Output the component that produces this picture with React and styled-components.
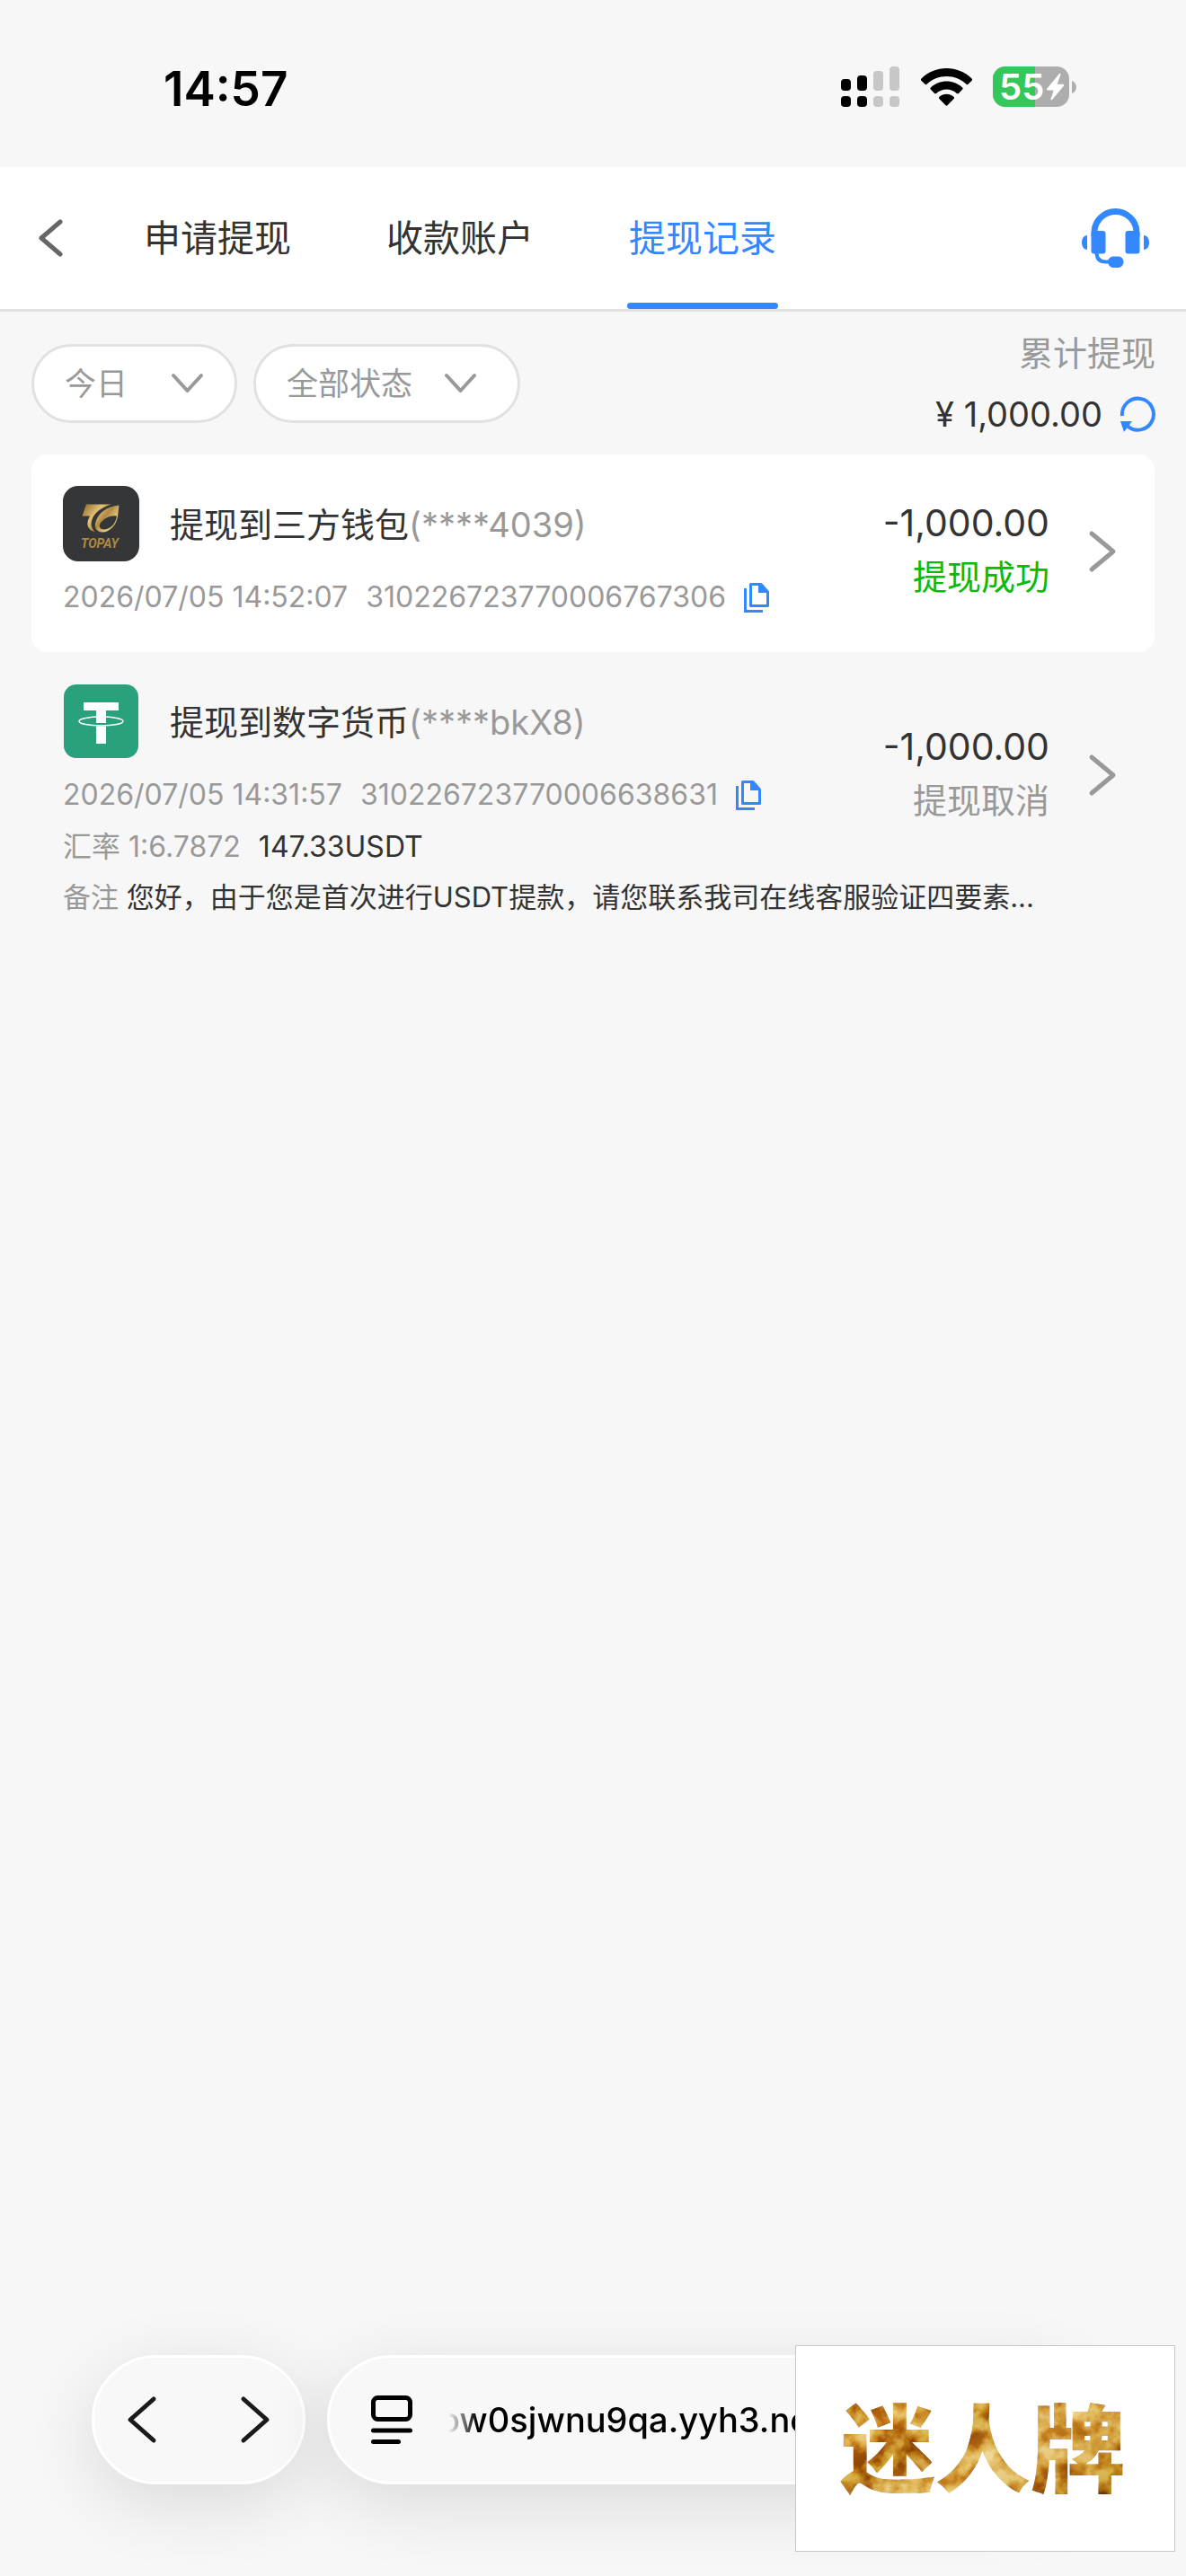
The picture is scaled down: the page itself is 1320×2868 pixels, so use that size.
import React from 'react'
import styled, { createGlobalStyle } from 'styled-components'

const color = {
  page: '#f7f7f7',
  white: '#ffffff',
  line: '#e1e1e1',
  ink: '#333333',
  mute: '#999999',
  blue: '#3388ff',
  green: '#09bb07',
}

const fontSize = {
  xs: '31px',
  sm: '32px',
  md: '35px',
  base: '38px',
  lg: '41px',
  xl: '53px',
}

const GlobalStyle = createGlobalStyle`
  * {
    box-sizing: border-box;
  }

  body {
    margin: 0;
    background: ${color.page};
    color: ${color.ink};
    font-family: Inter, 'Noto Sans CJK SC', sans-serif;
  }

  button,
  select {
    padding: 0;
    border: 0;
    background: none;
    color: inherit;
    font: inherit;
    cursor: pointer;
  }

  h2,
  p {
    margin: 0;
    font-weight: 400;
  }

  svg {
    display: block;
    flex: none;
    overflow: visible;
  }
`

const Page = styled.div`
  display: flex;
  flex-direction: column;
  min-height: 100vh;
  overflow: hidden;
`

/* status bar */

const StatusBar = styled.div`
  display: flex;
  align-items: center;
  justify-content: space-between;
  height: 186px;
  padding: 8px 121px 0 182px;
`

const Clock = styled.time`
  padding-top: 4px;
  color: #000;
  font-size: ${fontSize.xl};
  font-weight: 600;
  line-height: 64px;
`

const StatusIcons = styled.div`
  display: flex;
  align-items: center;
  gap: 23px;
`

/* top navigation */

const Header = styled.header`
  display: flex;
  align-items: stretch;
  height: 161px;
  padding: 0 40px;
  background: ${color.white};
  border-bottom: 3px solid ${color.line};
`

const IconButton = styled.button`
  display: flex;
  align-items: center;
  justify-content: center;
`

const Tabs = styled.nav`
  display: flex;
  flex: 1;
  gap: 102px;
  margin-left: 86px;
`

const Tab = styled.a`
  display: flex;
  align-items: center;
  justify-content: center;
  position: relative;
  width: 168px;
  padding-bottom: 6px;
  color: ${color.ink};
  font-size: ${fontSize.lg};
  text-decoration: none;

  &[aria-current='page'] {
    color: ${color.blue};
  }

  &[aria-current='page']::after {
    content: '';
    position: absolute;
    right: 0;
    bottom: 0;
    left: 0;
    height: 7px;
    border-radius: 4px;
    background: ${color.blue};
  }
`

/* filters and total */

const Toolbar = styled.section`
  display: flex;
  align-items: flex-start;
  height: 159px;
  padding: 20px 34px 0 35px;
`

const Filters = styled.div`
  display: flex;
  flex: 1;
  gap: 18px;
  padding-top: 16px;
`

const Filter = styled.label`
  display: block;
  position: relative;

  select {
    appearance: none;
    display: block;
    width: ${(props) => (props.$wide ? '297px' : '229px')};
    height: 88px;
    padding: 0 34px;
    border: 3px solid ${color.line};
    border-radius: 44px;
    background: ${color.white};
    color: ${color.mute};
    font-size: ${fontSize.md};
    outline: none;
  }

  svg {
    position: absolute;
    top: 32px;
    right: ${(props) => (props.$wide ? '48px' : '37px')};
    pointer-events: none;
  }
`

const Total = styled.div`
  display: flex;
  flex-direction: column;
  align-items: flex-end;
  font-size: ${fontSize.base};
`

const TotalLabel = styled.span`
  color: ${color.mute};
  line-height: 52px;
`

const TotalValue = styled.div`
  display: flex;
  align-items: center;
  gap: 20px;
  margin-top: 21px;
  line-height: 42px;
`

/* records */

const RecordList = styled.ul`
  flex: 1;
  margin: 0;
  padding: 0 35px;
  list-style: none;
`

const Record = styled.li`
  display: grid;
  grid-template-columns: 1fr auto auto;
  align-items: center;
  padding: 35px 42px 37px 35px;
  border-radius: 18px;

  &:nth-child(odd) {
    background: ${color.white};
  }
`

const RecordTitle = styled.div`
  display: flex;
  align-items: center;
  gap: 34px;

  h2 {
    padding-bottom: 4px;
    font-size: ${fontSize.base};
    white-space: nowrap;
  }
`

const RecordMeta = styled.div`
  display: flex;
  align-items: center;
  gap: 20px;
  margin-top: ${(props) => (props.$tight ? '10px' : '16px')};
  font-size: ${fontSize.sm};
  line-height: 48px;
  white-space: nowrap;
`

const Muted = styled.span`
  color: ${color.mute};
`

const RecordSum = styled.div`
  padding-bottom: 10px;
  font-size: ${fontSize.base};
  line-height: 56px;
  text-align: right;

  strong {
    display: block;
    font-size: ${fontSize.lg};
    font-weight: 400;
    line-height: 64px;
  }
`

const RecordStatus = styled.span`
  color: ${(props) => (props.$done ? color.green : color.mute)};
`

const OpenButton = styled(IconButton)`
  margin-left: 43px;
`

const Remark = styled.p`
  grid-column: 1 / 3;
  margin-top: 8px;
  font-size: ${fontSize.xs};
  line-height: 48px;
  white-space: nowrap;
`

/* browser bar */

const BrowserBar = styled.footer`
  display: flex;
  gap: 24px;
  position: relative;
  padding: 0 102px 102px;
`

const Capsule = styled.div`
  display: flex;
  align-items: center;
  height: 144px;
  border: 3px solid ${color.white};
  border-radius: 72px;
  background: #f8f8f8;
  box-shadow: 0 20px 80px rgba(0, 0, 0, 0.12);
`

const HistoryCapsule = styled(Capsule)`
  justify-content: space-between;
  width: 238px;
  padding: 0 34px;
`

const AddressCapsule = styled(Capsule)`
  flex: 1;
  gap: 30px;
  padding: 0 46px;
`

const Address = styled.button`
  flex: 1;
  color: #000;
  font-size: ${fontSize.base};
  font-weight: 500;
  line-height: 54px;
  text-align: left;
  white-space: nowrap;
  mask-image: linear-gradient(to right, transparent 10px, #000 42px);
`

const Badge = styled.aside`
  display: flex;
  align-items: center;
  justify-content: center;
  position: absolute;
  top: -11px;
  right: 12px;
  width: 423px;
  height: 230px;
  border: 1px solid #c8c8c8;
  background: ${color.white};
`

const BadgeText = styled.text`
  font-family: 'Noto Sans CJK SC', sans-serif;
  font-size: 106px;
  font-style: oblique 12deg;
  font-weight: 900;
`

const LogoText = styled.text`
  font-family: Roboto, sans-serif;
  font-size: 14px;
  font-style: italic;
  font-weight: 700;
`

const Chevron = ({ d, width, height, stroke, weight = 5 }) => (
  <svg width={width} height={height} viewBox={`0 0 ${width} ${height}`} fill="none" aria-hidden="true">
    <path d={d} stroke={stroke} strokeWidth={weight} strokeLinecap="round" strokeLinejoin="round" />
  </svg>
)

const DownIcon = () => <Chevron d="M3 3 18.500 20 34 3" width={37} height={23} stroke={color.mute} weight={4} />

const SignalIcon = () => (
  <svg width="66" height="46" viewBox="0 0 66 46" aria-hidden="true">
    <rect x="0" y="14" width="11" height="13" rx="4" />
    <rect x="18" y="10" width="11" height="17" rx="4" />
    <rect x="0" y="33" width="11" height="12" rx="4" />
    <rect x="18" y="33" width="11" height="12" rx="4" />
    <g fill="#c7c7c7">
      <rect x="36" y="5" width="11" height="22" rx="4" />
      <rect x="54" y="0" width="11" height="27" rx="4" />
      <rect x="36" y="33" width="11" height="12" rx="4" />
      <rect x="54" y="33" width="11" height="12" rx="4" />
    </g>
  </svg>
)

const WifiIcon = () => (
  <svg width="57" height="42" viewBox="0 0 57 42" aria-hidden="true">
    <path d="M28.500 0C39 0 49 4 56.500 11.500c.7.700.7 1.500.1 2.200L52.500 17.800c-.6.600-1.400.6-2 0C44.500 12.200 37 9 28.500 9S12.500 12.200 6.500 17.800c-.6.600-1.400.6-2 0L.4 13.700c-.6-.7-.6-1.500.1-2.200C8 4 18 0 28.500 0z" />
    <path d="M28.500 14.500c6.500 0 12.800 2.500 17.600 6.900.7.600.7 1.500.1 2.100l-4.300 4.400c-.6.600-1.400.6-2 .1C36.800 25.200 32.800 23.500 28.500 23.500S20.200 25.200 17.100 28c-.6.500-1.400.5-2-.1l-4.300-4.400c-.6-.6-.6-1.500.1-2.100 4.800-4.400 11.100-6.900 17.600-6.900z" />
    <path d="M28.500 28.800c3 0 5.800 1.100 8 3 .7.600.7 1.500.1 2.100l-7.100 7.300c-.6.600-1.400.6-2 0l-7.100-7.300c-.6-.6-.6-1.500.1-2.100 2.200-1.900 5-3 8-3z" />
  </svg>
)

const BatteryIcon = () => (
  <svg width="94" height="46" viewBox="0 0 94 46" role="img" aria-label="55%">
    <defs>
      <clipPath id="battery">
        <rect width="85" height="45" rx="14" />
      </clipPath>
    </defs>
    <g clipPath="url(#battery)">
      <rect width="85" height="45" fill="#adadad" />
      <rect width="47" height="45" fill="#34c759" />
    </g>
    <path d="M88 16c3 1 5 4 5 7s-2 6-5 7z" fill="#adadad" />
    <text x="7" y="37" fill="#fff" fontFamily="Inter, sans-serif" fontSize="40" fontWeight="600">
      55
    </text>
    <path d="M74 8 60 25c-.5.700 0 1.500.800 1.500h7L64.500 36c-.3 1 .9 1.700 1.600.9L79 21.500c.6-.7.100-1.700-.8-1.700h-6.500L75.500 9c.4-1-.8-1.800-1.500-1z" fill="#fff" />
  </svg>
)

const HeadsetIcon = () => (
  <svg width="76" height="67" viewBox="0 0 76 67" fill={color.blue} aria-hidden="true">
    <path d="M14 31v-4a23.500 23.500 0 0 1 47 0v4" fill="none" stroke={color.blue} strokeWidth="7" />
    <rect x="10.500" y="25" width="16" height="25.500" rx="3" />
    <rect x="48.500" y="25" width="16" height="25.500" rx="3" />
    <path d="M6 30v16c-4 0-6-4-6-8s2-8 6-8zM69 30v16c4 0 6-4 6-8s-2-8-6-8z" />
    <path d="M16.500 49c0 7.500 4 10.500 10 10.500h6" fill="none" stroke={color.blue} strokeWidth="4" />
    <path d="M35 53.500h5.500c3.500 0 6 2.700 6 6s-2.500 6.500-6 6.500H35c-2.500 0-4-1.500-5.500-4v-5c1.500-2.300 3-3.500 5.500-3.500z" />
  </svg>
)

const RefreshIcon = () => (
  <svg width="39" height="39" viewBox="0 0 39 39" fill="none" aria-hidden="true">
    <path d="M2 21a17.500 17.500 0 1 1 5.500 11" stroke={color.blue} strokeWidth="4" />
    <path d="M0 27h13L4 39z" fill={color.blue} />
  </svg>
)

const CopyIcon = () => (
  <svg width="28" height="33" viewBox="0 0 28 33" fill="none" aria-hidden="true">
    <path d="M1.500 6v25.500H21" stroke={color.blue} strokeWidth="3" />
    <path d="M7.500 1.500H19L26.500 10v15.500h-19z" stroke={color.blue} strokeWidth="3" strokeLinejoin="round" />
    <path d="M16 1h4l7 8v2H16z" fill={color.blue} />
  </svg>
)

const TopayLogo = () => (
  <svg width="85" height="84" viewBox="0 0 85 84" aria-hidden="true">
    <defs>
      <linearGradient id="topay" gradientUnits="userSpaceOnUse" x1="22" y1="20" x2="62" y2="52">
        <stop offset="0" stopColor="#8d6526" />
        <stop offset="0.35" stopColor="#e3c277" />
        <stop offset="0.55" stopColor="#b08a42" />
        <stop offset="0.75" stopColor="#e8cb82" />
        <stop offset="1" stopColor="#a37a33" />
      </linearGradient>
    </defs>
    <rect width="85" height="84" rx="17" fill="#353638" />
    <g fill="url(#topay)">
      <path d="M26 20.500h28C44 23.500 36 29 33 36c-2.500 6-1.500 11 2.500 15-8-1.500-10.500-9-5.500-17.500h-8.500z" />
      <path
        fillRule="evenodd"
        d="M62.500 21.500 61 34c-1.500 10-9 17.500-17 17.500-6.500 0-9.500-5-7.500-11.500C39.500 30 49 22.500 62.500 21.500zM60 33.500c-6-1.500-14 2-18 7.500-2.500 4-1 7.500 4 7.500 6.500 0 13-6.500 14-15z"
      />
    </g>
    <LogoText x="20" y="69" fill="#b08a42">
      TOPAY
    </LogoText>
  </svg>
)

const TetherLogo = () => (
  <svg width="85" height="84" viewBox="0 0 85 84" aria-hidden="true">
    <rect x="1" y="1" width="83" height="82" rx="14" fill="#28a17c" />
    <path d="M23 21h39v9H48v14H37V30H23zM37 47.500h11V67H37z" fill="#fff" />
    <ellipse cx="42.500" cy="42" rx="24.500" ry="5" fill="none" stroke="#fff" strokeWidth="1.500" />
  </svg>
)

const ReaderIcon = () => (
  <svg width="46" height="54" viewBox="0 0 46 54" fill="none" stroke="#000" strokeWidth="5" strokeLinecap="round" aria-hidden="true">
    <rect x="2.500" y="2.500" width="41" height="24" rx="5" />
    <path d="M2.500 39h41M2.500 51.500h28" />
  </svg>
)

const BadgeLogo = () => (
  <svg width="350" height="164" viewBox="0 0 350 164">
    <defs>
      <linearGradient id="gold" x1="0" y1="0" x2="1" y2="1">
        <stop offset="0" stopColor="#a8700f" />
        <stop offset="0.25" stopColor="#d9a441" />
        <stop offset="0.4" stopColor="#b57a16" />
        <stop offset="0.55" stopColor="#e0b65c" />
        <stop offset="0.8" stopColor="#bd8420" />
        <stop offset="1" stopColor="#8a5806" />
      </linearGradient>
      <filter id="foil" x="-0.050" y="0" width="1.100" height="1" colorInterpolationFilters="sRGB">
        <feTurbulence type="fractalNoise" baseFrequency="0.04" numOctaves="4" seed="8" result="noise" />
        <feColorMatrix
          in="noise"
          values="2.200 1.200 0 0 -1.150  2.200 1.200 0 0 -1.200  2.200 1.200 0 0 -1.250  0 0 0 0 1"
          result="tint"
        />
        <feBlend in="tint" in2="SourceGraphic" mode="soft-light" result="mix" />
        <feComposite in="mix" in2="SourceGraphic" operator="in" />
      </filter>
    </defs>
    <BadgeText x="13" y="122" fill="url(#gold)" filter="url(#foil)">
      迷人牌
    </BadgeText>
  </svg>
)

const records = [
  {
    id: '310226723770006767306',
    logo: <TopayLogo />,
    title: '提现到三方钱包',
    account: '(****4039)',
    time: '2026/07/05 14:52:07',
    amount: '-1,000.00',
    status: '提现成功',
    done: true,
  },
  {
    id: '310226723770006638631',
    logo: <TetherLogo />,
    title: '提现到数字货币',
    account: '(****bkX8)',
    time: '2026/07/05 14:31:57',
    amount: '-1,000.00',
    status: '提现取消',
    rate: '1:6.7872',
    received: '147.33USDT',
    remark: '您好，由于您是首次进行USDT提款，请您联系我司在线客服验证四要素...',
  },
]

const RecordItem = ({ record }) => (
  <Record>
    <div>
      <RecordTitle>
        {record.logo}
        <h2>
          {record.title}
          <Muted>{record.account}</Muted>
        </h2>
      </RecordTitle>
      <RecordMeta>
        <Muted>{record.time}</Muted>
        <Muted>{record.id}</Muted>
        <IconButton aria-label="复制">
          <CopyIcon />
        </IconButton>
      </RecordMeta>
      {record.rate && (
        <RecordMeta $tight>
          <Muted>汇率 {record.rate}</Muted>
          <span>{record.received}</span>
        </RecordMeta>
      )}
    </div>
    <RecordSum>
      <strong>{record.amount}</strong>
      <RecordStatus $done={record.done}>{record.status}</RecordStatus>
    </RecordSum>
    <OpenButton aria-label="详情">
      <Chevron d="M4 3 28 23 4 43" width={32} height={48} stroke={color.mute} />
    </OpenButton>
    {record.remark && (
      <Remark>
        <Muted>备注</Muted> {record.remark}
      </Remark>
    )}
  </Record>
)

const App = () => (
  <Page>
    <GlobalStyle />
    <StatusBar>
      <Clock>14:57</Clock>
      <StatusIcons>
        <SignalIcon />
        <WifiIcon />
        <BatteryIcon />
      </StatusIcons>
    </StatusBar>

    <Header>
      <IconButton aria-label="返回">
        <Chevron d="M27 3 6 21 27 39" width={32} height={42} stroke="#666666" />
      </IconButton>
      <Tabs>
        <Tab href="#apply">申请提现</Tab>
        <Tab href="#accounts">收款账户</Tab>
        <Tab href="#records" aria-current="page">
          提现记录
        </Tab>
      </Tabs>
      <IconButton aria-label="客服">
        <HeadsetIcon />
      </IconButton>
    </Header>

    <Toolbar>
      <Filters>
        <Filter>
          <select aria-label="日期">
            <option>今日</option>
          </select>
          <DownIcon />
        </Filter>
        <Filter $wide>
          <select aria-label="状态">
            <option>全部状态</option>
          </select>
          <DownIcon />
        </Filter>
      </Filters>
      <Total>
        <TotalLabel>累计提现</TotalLabel>
        <TotalValue>
          <span>¥ 1,000.00</span>
          <IconButton aria-label="刷新">
            <RefreshIcon />
          </IconButton>
        </TotalValue>
      </Total>
    </Toolbar>

    <RecordList>
      {records.map((record) => (
        <RecordItem key={record.id} record={record} />
      ))}
    </RecordList>

    <BrowserBar>
      <HistoryCapsule>
        <IconButton aria-label="后退">
          <Chevron d="M32 4 6 27 32 50" width={36} height={54} stroke="#1a1a1a" />
        </IconButton>
        <IconButton aria-label="前进">
          <Chevron d="M4 4 30 27 4 50" width={36} height={54} stroke="#1a1a1a" />
        </IconButton>
      </HistoryCapsule>
      <AddressCapsule>
        <ReaderIcon />
        <Address>ow0sjwnu9qa.yyh3.net</Address>
      </AddressCapsule>
      <Badge>
        <BadgeLogo />
      </Badge>
    </BrowserBar>
  </Page>
)

export default App
